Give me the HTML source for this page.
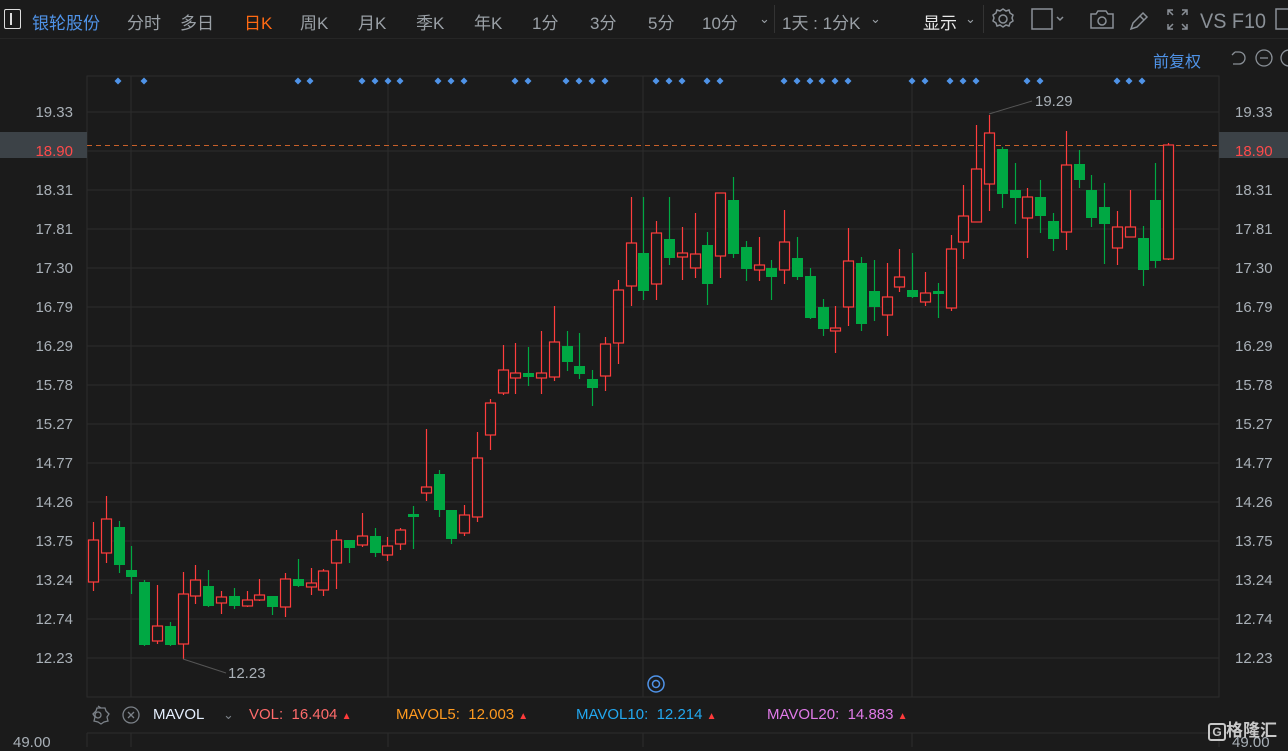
<!DOCTYPE html>
<html><head><meta charset="utf-8">
<style>
*{margin:0;padding:0;box-sizing:border-box}
body{width:1288px;height:747px;background:#1b1b1b;overflow:hidden;font-family:"Liberation Sans","Noto Sans CJK SC",sans-serif;position:relative}
.t{position:absolute;white-space:nowrap}
.nav{font-size:17px;color:#9aa0a6;top:9px}
.mv{font-size:15px;top:706px}
</style></head><body>
<div style="position:absolute;left:0;top:0;width:1288px;height:39px;border-bottom:1px solid #262626"></div>
<div style="position:absolute;left:4px;top:9px;width:17px;height:20px;border:1.5px solid #ddd;border-radius:2px"></div>
<div style="position:absolute;left:10px;top:13px;width:1.5px;height:12px;background:#ddd"></div>
<div class="t nav" style="left:32px;color:#4f93e8">银轮股份</div>
<div class="t nav" style="left:127px">分时</div>
<div class="t nav" style="left:180px">多日</div>
<div class="t nav" style="left:244px;color:#ff6a13">日K</div>
<div class="t nav" style="left:300px">周K</div>
<div class="t nav" style="left:358px">月K</div>
<div class="t nav" style="left:416px">季K</div>
<div class="t nav" style="left:474px">年K</div>
<div class="t nav" style="left:532px">1分</div>
<div class="t nav" style="left:590px">3分</div>
<div class="t nav" style="left:648px">5分</div>
<div class="t nav" style="left:702px">10分</div>
<div class="t nav" style="left:759px;font-size:13px;top:11px">⌄</div>
<div style="position:absolute;left:774px;top:5px;width:1px;height:28px;background:#333"></div>
<div class="t nav" style="left:782px">1天 : 1分K</div>
<div class="t nav" style="left:870px;font-size:13px;top:11px">⌄</div>
<div class="t nav" style="left:923px;color:#e8e8e8">显示</div>
<div class="t nav" style="left:965px;font-size:13px;top:11px">⌄</div>
<div style="position:absolute;left:983px;top:5px;width:1px;height:28px;background:#333"></div>
<svg style="position:absolute;left:0;top:0" width="1288" height="40">
 <g fill="none" stroke="#8a9097" stroke-width="1.5">
  <circle cx="1003" cy="19" r="4"/>
  <path d="M1003 9l3 2 3-1 1 3 3 2-1 3 1 3-3 2-1 3-3-1-3 2-3-2-3 1-1-3-3-2 1-3-1-3 3-2 1-3 3 1z"/>
  <rect x="1032" y="9" width="20" height="20"/>
  <path d="M1057 17l3 3 3-3"/>
  <path d="M1091 14h5l2-3h8l2 3h5v14h-22z"/><circle cx="1102" cy="21" r="4"/>
  <path d="M1131 29l2-6 10-10 4 4-10 10zM1140 16l4 4"/>
  <path d="M1168 15v-5h5M1187 15v-5h-5M1168 24v5h5M1187 24v5h-5M1168 10l5 5M1187 10l-5 5M1168 29l5-5M1187 29l-5-5"/>
  <rect x="1276" y="9" width="18" height="20"/>
 </g>
 <text x="1200" y="28" font-size="21" fill="#8a9097" font-family="Liberation Sans" textLength="66" lengthAdjust="spacingAndGlyphs">VS F10</text>
</svg>
<div class="t" style="left:1153px;top:48px;font-size:16px;color:#4f93e8">前复权</div>
<svg style="position:absolute;left:1226px;top:46px" width="62" height="26"><g fill="none" stroke="#8a9097" stroke-width="1.3">
<path d="M9 6h4a6 6 0 010 12h-6M9 6l-3 3"/><circle cx="38" cy="12" r="8"/><path d="M34 12h8"/><circle cx="63" cy="12" r="8"/></g></svg>
<svg id="c" style="position:absolute;left:0;top:0" width="1288" height="747"></svg>
<svg style="position:absolute;left:86px;top:704px" width="60" height="22"><g fill="none" stroke="#7b8188" stroke-width="1.3">
<circle cx="12" cy="11" r="3"/><path d="M12 2l3 2 4 0 1 3 3 3-2 3 1 4-4 1-3 2-3-2-4-1 1-4-2-3 3-3 1-3 4 0z"/>
<circle cx="45" cy="11" r="8"/><path d="M42 8l6 6M48 8l-6 6"/></g></svg>
<div class="t mv" style="left:153px;color:#e6f0ff">MAVOL</div>
<div class="t mv" style="left:223px;color:#7b8188;font-size:13px;top:707px">⌄</div>
<div class="t mv" style="left:249px;color:#ff6b6b">VOL: &nbsp;16.404 <span style="font-size:10px;color:#ff3b3b">▲</span></div>
<div class="t mv" style="left:396px;color:#ff9a1f">MAVOL5: &nbsp;12.003 <span style="font-size:10px;color:#ff3b3b">▲</span></div>
<div class="t mv" style="left:576px;color:#22a8f0">MAVOL10: &nbsp;12.214 <span style="font-size:10px;color:#ff3b3b">▲</span></div>
<div class="t mv" style="left:767px;color:#e07ae8">MAVOL20: &nbsp;14.883 <span style="font-size:10px;color:#ff3b3b">▲</span></div>
<div class="t" style="left:13px;top:734px;font-size:15px;color:#a9b0b7">49.00</div>
<div class="t" style="left:1232px;top:734px;font-size:15px;color:#a9b0b7">49.00</div>
<div class="t" style="left:1208px;top:716px;font-size:17px;color:#c8c8c8;font-weight:bold"><span style="display:inline-block;border:2px solid #c8c8c8;width:18px;height:18px;font-size:12px;text-align:center;line-height:14px;border-radius:3px">G</span>格隆汇</div>
<script>
var s='';
var L=87,R=1219,T=76,B=697;
var ys=[112,151,190,229,268,307,346,385,424,463,502,541,580,619,658];
var lb=['19.33','18.90','18.31','17.81','17.30','16.79','16.29','15.78','15.27','14.77','14.26','13.75','13.24','12.74','12.23'];
ys.forEach(function(y){s+='<line x1="'+L+'" x2="'+R+'" y1="'+y+'" y2="'+y+'" stroke="#2c2c2c"/>';});
[131,388,643,912].forEach(function(x){s+='<line x1="'+x+'" x2="'+x+'" y1="'+T+'" y2="'+B+'" stroke="#2c2c2c"/>';});
s+='<rect x="'+L+'" y="'+T+'" width="'+(R-L)+'" height="'+(B-T)+'" fill="none" stroke="#2c2c2c"/>';
s+='<line x1="'+L+'" x2="'+R+'" y1="733" y2="733" stroke="#2c2c2c"/>';
s+='<line x1="'+L+'" x2="'+L+'" y1="733" y2="747" stroke="#2c2c2c"/><line x1="'+R+'" x2="'+R+'" y1="733" y2="747" stroke="#2c2c2c"/>';
[131,388,643,912].forEach(function(x){s+='<line x1="'+x+'" x2="'+x+'" y1="733" y2="747" stroke="#2c2c2c"/>';});
s+='<rect x="0" y="132" width="'+L+'" height="26" fill="#3c4247"/><rect x="'+R+'" y="132" width="69" height="26" fill="#3c4247"/>';
ys.forEach(function(y,i){var c=i==1?'#ff4a4a':'#a9b0b7';
s+='<text x="73" y="'+(y+5)+'" text-anchor="end" font-size="15" fill="'+c+'" font-family="Liberation Sans">'+lb[i]+'</text>';
s+='<text x="1235" y="'+(y+5)+'" font-size="15" fill="'+c+'" font-family="Liberation Sans">'+lb[i]+'</text>';});
s+='<line x1="'+L+'" x2="'+R+'" y1="145.5" y2="145.5" stroke="#c8602a" stroke-dasharray="5,4"/>';
[118,144,298,310,362,375,388,400,438,451,464,515,528,566,579,592,605,656,669,682,707,720,784,797,810,822,835,848,912,925,950,963,976,1027,1040,1117,1129,1142].forEach(function(x){
s+='<path d="M'+x+' 77.5l3.5 3.5-3.5 3.5-3.5-3.5z" fill="#4f93e8"/>';});
var d=[[540,582,522,591,1],[519,553,496,563,1],[527,565,521,573,0],[570,577,546,594,0],[582,645,580,646,0],[626,641,585,644,1],[626,645,622,646,0],[594,644,572,659,1],[580,596,565,604,1],[586,606,570,607,0],[597,603,591,614,1],[596,606,588,609,0],[600,606,591,607,1],[595,600,579,601,1],[596,607,596,615,0],[579,607,573,617,1],[579,586,559,587,0],[583,587,568,595,1],[571,590,569,596,1],[540,563,530,589,1],[540,548,540,563,0],[536,545,513,547,1],[536,553,528,557,0],[546,555,537,561,1],[530,544,528,550,1],[514,517,506,549,0],[487,493,429,501,1],[474,510,470,517,0],[510,539,510,544,0],[515,533,505,536,1],[458,517,432,522,1],[403,435,399,450,1],[370,393,345,395,1],[373,378,343,394,1],[373,377,347,386,0],[373,378,331,394,1],[342,377,306,381,1],[346,362,331,371,0],[366,374,333,379,0],[379,388,370,406,0],[344,376,337,391,1],[290,343,280,364,1],[243,286,197,306,1],[253,291,197,300,0],[233,284,221,300,1],[239,258,197,265,0],[253,257,227,280,1],[254,268,213,278,1],[245,284,232,305,0],[193,256,193,278,1],[200,254,177,258,0],[247,269,241,281,0],[265,270,237,281,1],[268,277,260,300,0],[242,270,210,284,1],[258,277,237,280,0],[276,318,268,319,0],[307,329,299,336,0],[328,331,306,353,1],[261,307,228,326,1],[263,324,257,331,0],[291,307,260,321,0],[297,315,263,336,1],[277,287,249,292,1],[290,297,253,298,0],[293,302,272,306,1],[291,294,283,318,0],[249,308,235,311,1],[216,242,185,259,1],[169,222,125,222,1],[133,184,115,211,1],[149,194,147,208,0],[190,198,163,224,0],[197,218,188,258,1],[197,216,180,233,0],[221,239,213,251,0],[165,232,131,250,1],[164,180,150,188,0],[190,218,175,227,0],[207,224,183,264,0],[227,248,211,265,1],[227,237,190,237,1],[238,270,226,286,0],[200,261,163,268,0],[145,259,143,260,1]];
d.forEach(function(c,i){var x=Math.round(93+i*12.8)+0.5;var col=c[4]?'#ff3d3d':'#00a843';
s+='<line x1="'+x+'" x2="'+x+'" y1="'+c[2]+'" y2="'+c[3]+'" stroke="'+col+'" stroke-width="1.2"/>';
var h=Math.max(c[1]-c[0],2);
if(c[4]) s+='<rect x="'+(x-5)+'" y="'+c[0]+'" width="10" height="'+h+'" fill="#1b1b1b" stroke="'+col+'" stroke-width="1.2"/>';
else s+='<rect x="'+(x-5.5)+'" y="'+c[0]+'" width="11" height="'+h+'" fill="'+col+'"/>';});
s+='<line x1="183" y1="659" x2="226" y2="673" stroke="#555"/><text x="228" y="678" font-size="15" fill="#a9b0b7" font-family="Liberation Sans">12.23</text>';
s+='<line x1="989" y1="114" x2="1032" y2="101" stroke="#555"/><text x="1035" y="106" font-size="15" fill="#a9b0b7" font-family="Liberation Sans">19.29</text>';
s+='<circle cx="656" cy="684" r="8" fill="none" stroke="#4f93e8" stroke-width="1.5"/><circle cx="656" cy="684" r="3.5" fill="none" stroke="#4f93e8" stroke-width="1.5"/>';
document.getElementById('c').innerHTML=s;
</script>
</body></html>
